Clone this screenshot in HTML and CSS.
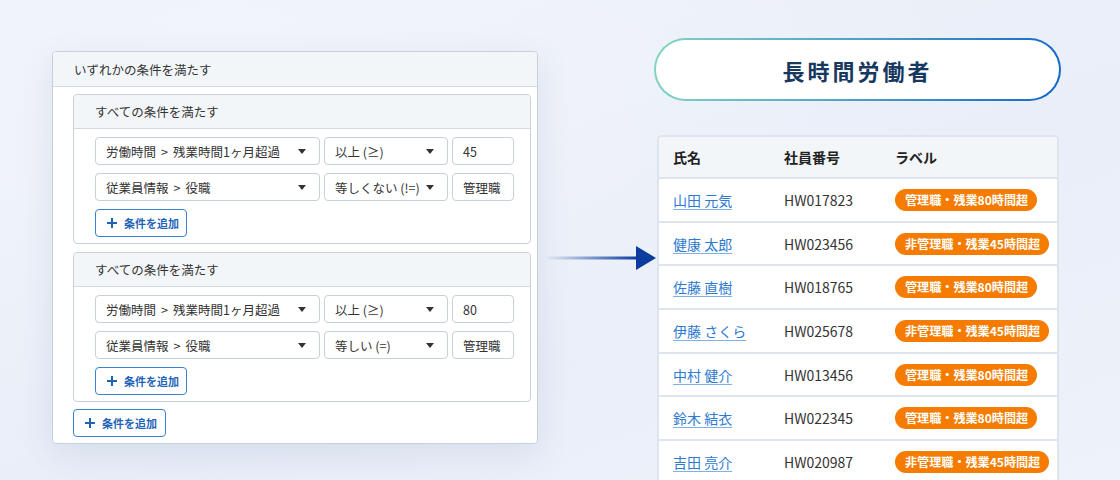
FILE: index.html
```html
<!DOCTYPE html>
<html lang="ja">
<head>
    <meta charset="UTF-8">
    <title>長時間労働者</title>
    <link rel="stylesheet" href="styles.css">
</head>
<body>
    <div class="page">
        <!-- 条件ビルダー -->
        <div class="rules">
            <div class="rules-head">いずれかの条件を満たす</div>
            <div class="rules-body">
                <div class="group">
                    <div class="group-head">すべての条件を満たす</div>
                    <div class="group-body">
                        <div class="cond">
                            <div class="select field"><span>労働時間<i class="sep">&gt;</i>残業時間1ヶ月超過</span><span class="caret"></span></div>
                            <div class="select op">以上 (≥)<span class="caret"></span></div>
                            <div class="value">45</div>
                        </div>
                        <div class="cond">
                            <div class="select field"><span>従業員情報<i class="sep">&gt;</i>役職</span><span class="caret"></span></div>
                            <div class="select op">等しくない (!=)<span class="caret"></span></div>
                            <div class="value">管理職</div>
                        </div>
                        <button class="add-btn"><svg width="10" height="10" viewBox="0 0 10 10"><path d="M5 0V10M0 5H10" stroke="#1f63b8" stroke-width="2"/></svg>条件を追加</button>
                    </div>
                </div>
                <div class="group">
                    <div class="group-head">すべての条件を満たす</div>
                    <div class="group-body">
                        <div class="cond">
                            <div class="select field"><span>労働時間<i class="sep">&gt;</i>残業時間1ヶ月超過</span><span class="caret"></span></div>
                            <div class="select op">以上 (≥)<span class="caret"></span></div>
                            <div class="value">80</div>
                        </div>
                        <div class="cond">
                            <div class="select field"><span>従業員情報<i class="sep">&gt;</i>役職</span><span class="caret"></span></div>
                            <div class="select op">等しい (=)<span class="caret"></span></div>
                            <div class="value">管理職</div>
                        </div>
                        <button class="add-btn"><svg width="10" height="10" viewBox="0 0 10 10"><path d="M5 0V10M0 5H10" stroke="#1f63b8" stroke-width="2"/></svg>条件を追加</button>
                    </div>
                </div>
                <button class="add-btn outer-add"><svg width="10" height="10" viewBox="0 0 10 10"><path d="M5 0V10M0 5H10" stroke="#1f63b8" stroke-width="2"/></svg>条件を追加</button>
            </div>
        </div>

        <div class="arrow">
            <svg width="120" height="26" viewBox="0 0 120 26">
                <defs>
                    <linearGradient id="shaft" x1="0" x2="1" y1="0" y2="0">
                        <stop offset="0" stop-color="#0b3c9e" stop-opacity="0"/>
                        <stop offset="1" stop-color="#0b3c9e"/>
                    </linearGradient>
                </defs>
                <rect x="7" y="11.5" width="93" height="3" fill="url(#shaft)"/>
                <polygon points="98,1 118,13 98,25" fill="#0b3c9e"/>
            </svg>
        </div>

        <!-- 結果 -->
        <div class="result">
            <div class="title">長時間労働者</div>
            <div class="table-wrap">
                <table class="people">
                    <thead>
                        <tr><th class="c-name">氏名</th><th class="c-id">社員番号</th><th>ラベル</th></tr>
                    </thead>
                    <tbody>
                        <tr><td><a href="#">山田 元気</a></td><td>HW017823</td><td><span class="badge">管理職・残業80時間超</span></td></tr>
                        <tr><td><a href="#">健康 太郎</a></td><td>HW023456</td><td><span class="badge">非管理職・残業45時間超</span></td></tr>
                        <tr><td><a href="#">佐藤 直樹</a></td><td>HW018765</td><td><span class="badge">管理職・残業80時間超</span></td></tr>
                        <tr><td><a href="#">伊藤 さくら</a></td><td>HW025678</td><td><span class="badge">非管理職・残業45時間超</span></td></tr>
                        <tr><td><a href="#">中村 健介</a></td><td>HW013456</td><td><span class="badge">管理職・残業80時間超</span></td></tr>
                        <tr><td><a href="#">鈴木 結衣</a></td><td>HW022345</td><td><span class="badge">管理職・残業80時間超</span></td></tr>
                        <tr><td><a href="#">吉田 亮介</a></td><td>HW020987</td><td><span class="badge">非管理職・残業45時間超</span></td></tr>
                    </tbody>
                </table>
            </div>
        </div>
    </div>
</body>
</html>
```

FILE: styles.css
```css
html, body {
    margin: 0;
    height: 100%;
    overflow: hidden;
}

body {
    font-family: "Noto Sans CJK JP", "Noto Sans", sans-serif;
    color: #333;
    background: radial-gradient(ellipse at 20% 10%, #f1f4fa 0%, rgba(241, 244, 250, 0) 60%),
                linear-gradient(160deg, #eef2f9 0%, #e9eef8 60%, #eef2fa 100%);
}

.page {
    display: flex;
    align-items: flex-start;
    padding: 38px 0 0 52px;
}

/* 左パネル */
.rules {
    width: 486px;
    margin-top: 13px;
    background: #fff;
    border: 1px solid #c8d0da;
    border-radius: 4px;
    box-shadow: 0 10px 34px rgba(70, 100, 150, 0.12);
    box-sizing: border-box;
}

.rules-head,
.group-head {
    display: flex;
    align-items: center;
    padding-left: 21px;
    background: #f3f6f9;
    border-bottom: 1px solid #d3dae3;
    border-radius: 4px 4px 0 0;
    font-size: 12.5px;
    color: #333;
}

.rules-head {
    height: 34px;
}

.group-head {
    height: 33px;
}

.rules-body {
    padding: 7px 6px 6px 20px;
    display: flex;
    flex-direction: column;
    gap: 8px;
}

.group {
    border: 1px solid #c8d0da;
    border-radius: 4px;
}

.group-body {
    padding: 8px 0 6px 21px;
    display: flex;
    flex-direction: column;
    align-items: flex-start;
    gap: 8px;
}

.cond {
    display: flex;
    gap: 4px;
}

.select,
.value {
    height: 28px;
    box-sizing: border-box;
    border: 1px solid #c8d0da;
    border-radius: 4px;
    display: flex;
    align-items: center;
    padding-left: 10px;
    font-size: 12.5px;
    color: #333;
    white-space: nowrap;
}

.select {
    justify-content: space-between;
    padding-right: 13px;
}

.sep {
    font-style: normal;
    margin: 0 5px;
}

.field {
    width: 225px;
}

.op {
    width: 124px;
}

.value {
    width: 62px;
}

.caret {
    width: 0;
    height: 0;
    border-left: 4px solid transparent;
    border-right: 4px solid transparent;
    border-top: 5px solid #333;
}

.add-btn {
    height: 28px;
    width: 92px;
    box-sizing: border-box;
    display: flex;
    align-items: center;
    gap: 7px;
    padding: 0 0 0 11px;
    background: #fff;
    border: 1px solid #3a80d2;
    border-radius: 4px;
    font-family: "Noto Sans CJK JP", sans-serif;
    font-size: 11px;
    font-weight: bold;
    color: #1f63b8;
}

.outer-add {
    margin-top: -1px;
    width: 93px;
}

/* 矢印 */
.arrow {
    width: 116px;
    margin-top: 207px;
}

.arrow svg {
    display: block;
    overflow: visible;
}

/* 右側 */
.result {
    width: 407px;
}

.title {
    height: 63px;
    box-sizing: border-box;
    border: 2px solid transparent;
    border-radius: 32px;
    background: linear-gradient(#fff, #fff) padding-box,
                linear-gradient(100deg, #85d4c2 0%, #4aa2c8 50%, #1566c8 100%) border-box;
    display: flex;
    align-items: center;
    justify-content: center;
    font-size: 22px;
    font-weight: bold;
    letter-spacing: 3px;
    color: #17385f;
}

.table-wrap {
    margin: 34px 2px 0 3px;
    border: 2px solid #dfe5ee;
    border-bottom: none;
    border-radius: 5px 5px 0 0;
    background: #fff;
    overflow: hidden;
}

.people {
    width: 100%;
    border-collapse: collapse;
    table-layout: fixed;
}

.people th {
    height: 40px;
    background: #f3f6f9;
    border-bottom: 2px solid #dfe5ee;
    text-align: left;
    font-size: 14px;
    font-weight: bold;
    color: #222;
    padding: 0;
}

.people th:first-child,
.people td:first-child {
    padding-left: 14px;
}

.people .c-name {
    width: 111px;
}

.people .c-id {
    width: 111px;
}

.people td {
    height: 41.7px;
    border-bottom: 2px solid #dfe5ee;
    font-size: 14px;
    color: #333;
    padding: 0;
    white-space: nowrap;
}

.people a {
    color: #2d7ad0;
    text-decoration: underline;
    text-underline-offset: 3px;
    text-decoration-color: #7fb0e6;
}

.badge {
    display: inline-block;
    height: 22px;
    line-height: 22px;
    padding: 0 9px 0 10px;
    border-radius: 11px;
    background: #f57c00;
    color: #fff;
    font-size: 12.1px;
    font-weight: bold;
}
```
